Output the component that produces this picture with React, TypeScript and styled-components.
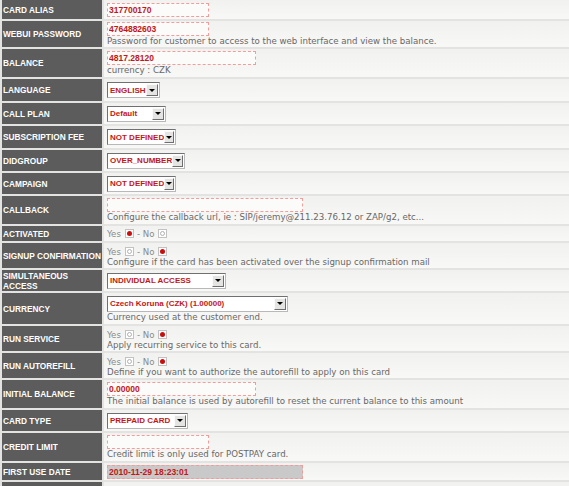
import React from "react";
import styled, { createGlobalStyle } from "styled-components";

type Field =
  | { kind: "text"; value: string; width: number; disabled?: boolean }
  | { kind: "select"; value: string; width: number }
  | { kind: "radio"; yes: boolean }
  | { kind: "none" };

interface RowData {
  label: React.ReactNode;
  height: number;
  field: Field;
  help?: string;
}

//#region Styled components

const GlobalStyle = createGlobalStyle`
  html, body {
    margin: 0;
    padding: 0;
  }
  body {
    background: #e3e3e1;
    overflow: hidden;
  }
`;

const Form = styled("div")`
  display: grid;
  grid-template-columns: 100px 1fr;
  gap: 2px;
  padding-left: 2px;
  background: #e3e3e1;
`;

const Label = styled("div")<{ $h: number }>`
  height: ${(p) => p.$h}px;
  display: flex;
  align-items: center;
  padding-left: 1px;
  background: #5c5c5c;
  color: #ffffff;
  font: bold 8.3px/10px "Liberation Sans", Arial, sans-serif;
  white-space: nowrap;
`;

const Value = styled("div")<{ $h: number }>`
  height: ${(p) => p.$h}px;
  display: flex;
  flex-direction: column;
  justify-content: center;
  align-items: flex-start;
  padding: 0 3px;
  background: linear-gradient(#f1f1ef, #f8f8f6);
`;

const TextField = styled("input")<{ $w: number; $disabled?: boolean }>`
  width: ${(p) => p.$w}px;
  height: 14px;
  box-sizing: border-box;
  margin: 0;
  padding: 0 1px;
  border: 1px dashed #f29c9c;
  outline: none;
  background: ${(p) => (p.$disabled ? "#c9c9c9" : "#fbfbfa")};
  color: #c41616;
  font: bold 8.5px "Liberation Sans", Arial, sans-serif;
`;

const Select = styled("div")<{ $w: number }>`
  width: ${(p) => p.$w}px;
  height: 16px;
  box-sizing: border-box;
  display: flex;
  align-items: center;
  justify-content: space-between;
  padding: 0 1px 0 2px;
  border: 1px solid;
  border-color: #707070 #b8b8b8 #b8b8b8 #707070;
  background: #ffffff;
  color: #c41616;
  font: bold 8px "Liberation Sans", Arial, sans-serif;
  white-space: nowrap;
`;

const Arrow = styled("span")`
  width: 12px;
  height: 12px;
  box-sizing: border-box;
  display: flex;
  align-items: center;
  justify-content: center;
  background: #e4e4e2;
  border: 1px solid;
  border-color: #fafafa #6e6e6e #6e6e6e #fafafa;
  &::after {
    content: "";
    border-left: 3px solid transparent;
    border-right: 3px solid transparent;
    border-top: 3px solid #000000;
  }
`;

const Choice = styled("div")<{ $withHelp: boolean }>`
  display: flex;
  align-items: center;
  height: 11px;
  padding-top: ${(p) => (p.$withHelp ? 2 : 0)}px;
  color: #8a8a8a;
  font: 8.6px "DejaVu Sans", Verdana, sans-serif;
`;

const ChoiceText = styled("span")`
  margin-right: 4px;
`;

const RadioBox = styled("span")<{ $on: boolean }>`
  width: 9px;
  height: 9px;
  box-sizing: border-box;
  display: inline-flex;
  align-items: center;
  justify-content: center;
  margin-right: 3px;
  border: 1px solid #c2c2c2;
  background: #ffffff;
  &::after {
    content: "";
    width: 5px;
    height: 5px;
    box-sizing: border-box;
    border-radius: 50%;
    background: ${(p) => (p.$on ? "#c80f0f" : "transparent")};
    border: ${(p) => (p.$on ? "none" : "1px solid #b0b0b0")};
  }
`;

const Help = styled("div")`
  color: #686868;
  font: 8.65px/10px "DejaVu Sans", Verdana, sans-serif;
  white-space: nowrap;
`;
//#endregion

const rows: RowData[] = [
  { label: "CARD ALIAS", height: 19, field: { kind: "text", value: "317700170", width: 102 } },
  {
    label: "WEBUI PASSWORD",
    height: 26,
    field: { kind: "text", value: "4764882603", width: 102 },
    help: "Password for customer to access to the web interface and view the balance.",
  },
  {
    label: "BALANCE",
    height: 28,
    field: { kind: "text", value: "4817.28120", width: 149 },
    help: "currency : CZK",
  },
  { label: "LANGUAGE", height: 22, field: { kind: "select", value: "ENGLISH", width: 53 } },
  { label: "CALL PLAN", height: 21, field: { kind: "select", value: "Default", width: 59 } },
  { label: "SUBSCRIPTION FEE", height: 22, field: { kind: "select", value: "NOT DEFINED", width: 69 } },
  { label: "DIDGROUP", height: 21, field: { kind: "select", value: "OVER_NUMBER", width: 78 } },
  { label: "CAMPAIGN", height: 21, field: { kind: "select", value: "NOT DEFINED", width: 69 } },
  {
    label: "CALLBACK",
    height: 28,
    field: { kind: "text", value: "", width: 196 },
    help: "Configure the callback url, ie : SIP/jeremy@211.23.76.12 or ZAP/g2, etc...",
  },
  { label: "ACTIVATED", height: 15, field: { kind: "radio", yes: true } },
  {
    label: "SIGNUP CONFIRMATION",
    height: 25,
    field: { kind: "radio", yes: false },
    help: "Configure if the card has been activated over the signup confirmation mail",
  },
  {
    label: (
      <>
        SIMULTANEOUS
        <br />
        ACCESS
      </>
    ),
    height: 21,
    field: { kind: "select", value: "INDIVIDUAL ACCESS", width: 119 },
  },
  {
    label: "CURRENCY",
    height: 31,
    field: { kind: "select", value: "Czech Koruna (CZK) (1.00000)", width: 181 },
    help: "Currency used at the customer end.",
  },
  {
    label: "RUN SERVICE",
    height: 25,
    field: { kind: "radio", yes: false },
    help: "Apply recurring service to this card.",
  },
  {
    label: "RUN AUTOREFILL",
    height: 25,
    field: { kind: "radio", yes: false },
    help: "Define if you want to authorize the autorefill to apply on this card",
  },
  {
    label: "INITIAL BALANCE",
    height: 28,
    field: { kind: "text", value: "0.00000", width: 149 },
    help: "The initial balance is used by autorefill to reset the current balance to this amount",
  },
  { label: "CARD TYPE", height: 21, field: { kind: "select", value: "PREPAID CARD", width: 81 } },
  {
    label: "CREDIT LIMIT",
    height: 28,
    field: { kind: "text", value: "", width: 102 },
    help: "Credit limit is only used for POSTPAY card.",
  },
  {
    label: "FIRST USE DATE",
    height: 17,
    field: { kind: "text", value: "2010-11-29 18:23:01", width: 196, disabled: true },
  },
  { label: "", height: 19, field: { kind: "none" } },
];

const FieldControl: React.FC<{ field: Field; withHelp: boolean }> = ({ field, withHelp }) => {
  if (field.kind === "none") return null;
  if (field.kind === "text") {
    return (
      <TextField
        $w={field.width}
        $disabled={field.disabled}
        value={field.value}
        readOnly
      />
    );
  }
  if (field.kind === "select") {
    return (
      <Select $w={field.width}>
        <span>{field.value}</span>
        <Arrow />
      </Select>
    );
  }
  return (
    <Choice $withHelp={withHelp}>
      <ChoiceText>Yes</ChoiceText>
      <RadioBox $on={field.yes} />
      <ChoiceText>- No</ChoiceText>
      <RadioBox $on={!field.yes} />
    </Choice>
  );
};

const App: React.FC = () => {
  return (
    <>
      <GlobalStyle />
      <Form>
        {rows.map((row, i) => (
          <React.Fragment key={i}>
            <Label $h={row.height}>{row.label}</Label>
            <Value $h={row.height}>
              <FieldControl field={row.field} withHelp={!!row.help} />
              {row.help && <Help>{row.help}</Help>}
            </Value>
          </React.Fragment>
        ))}
      </Form>
    </>
  );
};
export default App;
